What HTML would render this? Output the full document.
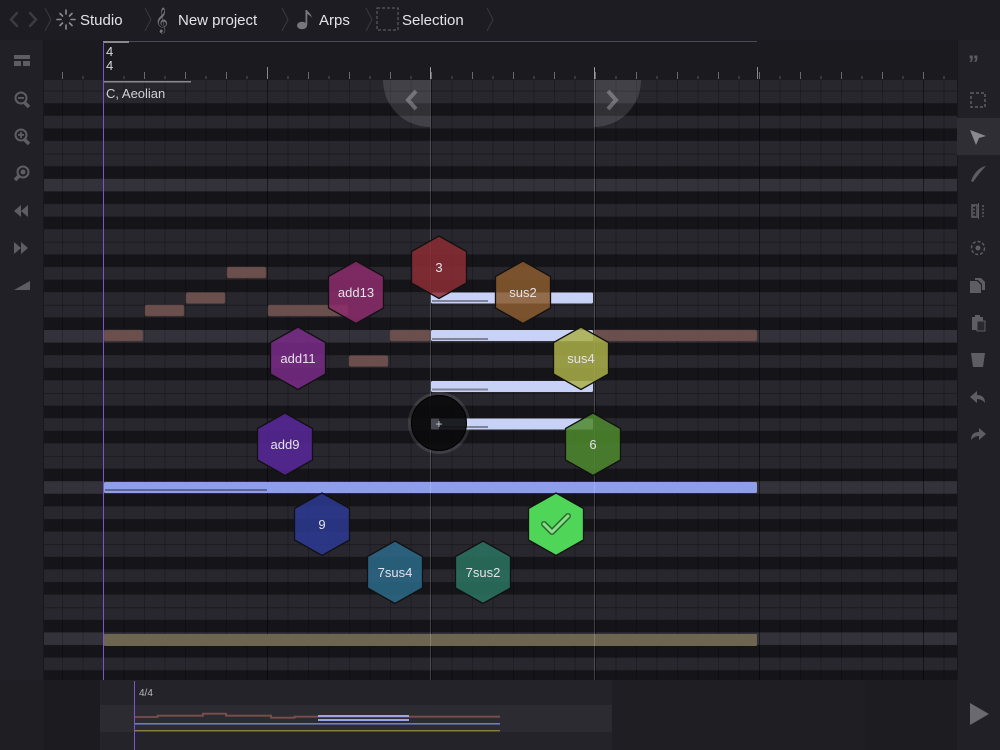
<!DOCTYPE html>
<html><head><meta charset="utf-8"><style>
html,body{margin:0;padding:0;width:1000px;height:750px;overflow:hidden;background:#1c1b21;font-family:"Liberation Sans",sans-serif}
svg{position:absolute;left:0;top:0}
</style></head><body>
<svg width="1000" height="750" viewBox="0 0 1000 750" xmlns="http://www.w3.org/2000/svg" font-family="Liberation Sans, sans-serif">
<defs>
<pattern id="rows" x="0" y="27.6" width="1000" height="151.2" patternUnits="userSpaceOnUse">
<rect x="0" y="0" width="1000" height="151.2" fill="#28272e"/>
<rect x="0" y="0" width="1000" height="12.6" fill="#33323a"/>
<rect x="0" y="12.6" width="1000" height="12.6" fill="#151418"/>
<rect x="0" y="37.8" width="1000" height="12.6" fill="#151418"/>
<rect x="0" y="75.6" width="1000" height="12.6" fill="#151418"/>
<rect x="0" y="100.8" width="1000" height="12.6" fill="#151418"/>
<rect x="0" y="138.6" width="1000" height="12.6" fill="#151418"/>
<rect x="0" y="63" width="1000" height="1" fill="#1c1b20"/>
<rect x="0" y="126" width="1000" height="1" fill="#1c1b20"/>
</pattern>
<pattern id="cols" x="103" y="0" width="20.5" height="10" patternUnits="userSpaceOnUse">
<rect x="0" y="0" width="1" height="10" fill="rgba(0,0,0,0.22)"/>
</pattern>
<pattern id="bars" x="103" y="0" width="164" height="10" patternUnits="userSpaceOnUse">
<rect x="0" y="0" width="1" height="10" fill="rgba(0,0,0,0.35)"/>
</pattern>
<pattern id="tk" x="103" y="0" width="20.5" height="10" patternUnits="userSpaceOnUse">
<rect x="0" y="0" width="1" height="10" fill="#55545c"/>
</pattern>
<pattern id="tb" x="103" y="0" width="41" height="10" patternUnits="userSpaceOnUse">
<rect x="0" y="0" width="1" height="10" fill="#6a6970"/>
</pattern>
</defs>
<rect x="0" y="0" width="1000" height="40" fill="#1d1c22"/>
<g fill="none" stroke="#3c3b42" stroke-width="2.5" stroke-linecap="round">
<path d="M17 13 L11 19.5 L17 26"/><path d="M30 13 L36 19.5 L30 26"/>
</g>
<g fill="none" stroke="#3a3940" stroke-width="1">
<path d="M45 8 L51 19.5 L45 31"/><path d="M145 8 L151 19.5 L145 31"/><path d="M282 8 L288 19.5 L282 31"/><path d="M366 8 L372 19.5 L366 31"/><path d="M487 8 L493 19.5 L487 31"/>
</g>
<g stroke="#8c8b92" stroke-width="1.6" stroke-linecap="round">
<path d="M66 10 L66 14"/><path d="M66 25 L66 29"/><path d="M57 19.5 L61 19.5"/><path d="M71 19.5 L75 19.5"/>
<path d="M60 13.5 L62.5 16"/><path d="M72 13.5 L69.5 16"/><path d="M60 25.5 L62.5 23"/><path d="M72 25.5 L69.5 23"/>
</g>
<text x="80" y="25" font-size="15" fill="#e4e4e8">Studio</text>
<text x="155" y="27" font-size="22" fill="#77767c" font-family="DejaVu Sans, sans-serif">𝄞</text>
<text x="178" y="25" font-size="15" fill="#e4e4e8">New project</text>
<g fill="#77767c"><ellipse cx="302" cy="25.5" rx="5" ry="3.8"/><rect x="305.5" y="10" width="1.8" height="15"/><path d="M306 10 Q311 13 312 18 Q309 14 306 14Z"/></g>
<text x="319" y="25" font-size="15" fill="#e4e4e8">Arps</text>
<rect x="377" y="8" width="21" height="22" fill="none" stroke="#6a6970" stroke-width="1" stroke-dasharray="3 2"/>
<text x="402" y="25" font-size="15" fill="#e4e4e8">Selection</text>
<rect x="0" y="40" width="1000" height="40" fill="#1b1a1f"/>
<rect x="103" y="41" width="654" height="1" fill="#4a4a5a"/>
<rect x="103" y="41" width="26" height="2" fill="#8a8990"/>
<text x="106" y="56" font-size="13" fill="#d8d8dc">4</text>
<text x="106" y="70" font-size="13" fill="#d8d8dc">4</text>
<rect x="44" y="76" width="913" height="3" fill="url(#tk)"/>
<rect x="44" y="72" width="913" height="7" fill="url(#tb)"/>
<g fill="#8a8990"><rect x="267" y="67" width="1" height="12"/><rect x="430" y="67" width="1" height="12"/><rect x="594" y="67" width="1" height="12"/><rect x="757" y="67" width="1" height="12"/></g>
<rect x="44" y="80" width="913" height="600" fill="url(#rows)"/>
<rect x="44" y="80" width="913" height="600" fill="url(#cols)"/>
<rect x="44" y="80" width="913" height="600" fill="url(#bars)"/>
<rect x="103" y="81" width="88" height="1.5" fill="#8a8990"/>
<text x="106" y="98" font-size="13" fill="#d0d0d6">C, Aeolian</text>
<g fill="#6b4f4d" stroke="#57403f" stroke-width="0.5">
<rect x="227" y="267" width="39" height="11" rx="1.5"/>
<rect x="186" y="292.5" width="39" height="11" rx="1.5"/>
<rect x="145" y="305" width="39" height="11" rx="1.5"/>
<rect x="268" y="305" width="80" height="11" rx="1.5"/>
<rect x="104" y="330" width="39" height="11" rx="1.5"/>
<rect x="390" y="330" width="40" height="11" rx="1.5"/>
<rect x="594" y="330" width="163" height="11" rx="1.5"/>
<rect x="349" y="355.5" width="39" height="11" rx="1.5"/>
</g>
<g fill="#c8d2f6">
<rect x="431" y="292.5" width="162" height="11" rx="1.5"/>
<rect x="431" y="330" width="162" height="11" rx="1.5"/>
<rect x="431" y="381" width="162" height="11" rx="1.5"/>
<rect x="431" y="418.5" width="162" height="11" rx="1.5"/>
</g>
<g fill="#7e8398"><rect x="432" y="300" width="56" height="2"/><rect x="432" y="338" width="56" height="2"/><rect x="432" y="388.5" width="56" height="2"/><rect x="432" y="426" width="56" height="2"/></g>
<rect x="104" y="482" width="653" height="11" rx="1.5" fill="#8e9ee8"/>
<rect x="105" y="489" width="162" height="2" fill="#5d6595"/>
<rect x="104" y="634" width="653" height="12" rx="1" fill="#6d6550"/>
<rect x="430" y="68" width="1" height="612" fill="rgba(255,255,255,0.18)"/>
<rect x="594" y="68" width="1" height="612" fill="rgba(255,255,255,0.18)"/>
<rect x="103" y="42" width="1" height="708" fill="#7a55d0"/>
<path d="M430 80 L383 80 A47 47 0 0 0 430 127 Z" fill="rgba(255,255,255,0.12)"/>
<path d="M594 80 L641 80 A47 47 0 0 1 594 127 Z" fill="rgba(255,255,255,0.12)"/>
<path d="M416 91 L408 100 L416 109" fill="none" stroke="rgba(255,255,255,0.28)" stroke-width="4"/>
<path d="M608 91 L616 100 L608 109" fill="none" stroke="rgba(255,255,255,0.28)" stroke-width="4"/>
<g stroke="#111" stroke-width="1.3" fill-opacity="0.85">
<polygon points="439,236 466.5,251.5 466.5,283 439,298.5 411.5,283 411.5,251.5" fill="#8b2d34"/>
<polygon points="356,261 383.5,276.5 383.5,308 356,323.5 328.5,308 328.5,276.5" fill="#8c2c6c"/>
<polygon points="523,261 550.5,276.5 550.5,308 523,323.5 495.5,308 495.5,276.5" fill="#8a5a2e"/>
<polygon points="298,327 325.5,342.5 325.5,374 298,389.5 270.5,374 270.5,342.5" fill="#7a2a88"/>
<polygon points="581,327 608.5,342.5 608.5,374 581,389.5 553.5,374 553.5,342.5" fill="#aab049"/>
<polygon points="285,413 312.5,428.5 312.5,460 285,475.5 257.5,460 257.5,428.5" fill="#58279b"/>
<polygon points="593,413 620.5,428.5 620.5,460 593,475.5 565.5,460 565.5,428.5" fill="#4e8a2d"/>
<polygon points="322,493 349.5,508.5 349.5,540 322,555.5 294.5,540 294.5,508.5" fill="#2c3a93"/>
<polygon points="556,493 583.5,508.5 583.5,540 556,555.5 528.5,540 528.5,508.5" fill="#4fd557" fill-opacity="1"/>
<polygon points="395,541 422.5,556.5 422.5,588 395,603.5 367.5,588 367.5,556.5" fill="#2c6a89"/>
<polygon points="483,541 510.5,556.5 510.5,588 483,603.5 455.5,588 455.5,556.5" fill="#2a7460"/>
</g>
<path d="M544 524 L552 532 L568 516" fill="none" stroke="#2c6b30" stroke-width="6" stroke-linejoin="round" stroke-linecap="round"/>
<path d="M544 524 L552 532 L568 516" fill="none" stroke="#8be08c" stroke-width="3" stroke-linejoin="round" stroke-linecap="round"/>
<g font-size="13" fill="#e4e2e8" text-anchor="middle">
<text x="439" y="272">3</text><text x="356" y="297">add13</text><text x="523" y="297">sus2</text>
<text x="298" y="363">add11</text><text x="581" y="363">sus4</text><text x="285" y="449">add9</text>
<text x="593" y="449">6</text><text x="322" y="529">9</text><text x="395" y="577">7sus4</text><text x="483" y="577">7sus2</text>
</g>
<circle cx="439" cy="423" r="29.5" fill="none" stroke="rgba(255,255,255,0.1)" stroke-width="3"/>
<circle cx="439" cy="423" r="27.5" fill="rgba(10,10,12,0.9)" stroke="#000" stroke-width="1"/>
<rect x="431" y="418.5" width="8" height="11" fill="#5a5d6a" opacity="0.7"/>
<text x="439" y="428" font-size="12" fill="#ccc" text-anchor="middle">+</text>
<rect x="0" y="40" width="44" height="710" fill="#212026"/>
<rect x="43" y="40" width="1" height="640" fill="#18171c"/>
<g fill="#5e5d64">
<rect x="14" y="55" width="16" height="4"/><rect x="14" y="61" width="7" height="5"/><rect x="23" y="61" width="7" height="5"/>
<circle cx="21" cy="98" r="5.5" fill="none" stroke="#5e5d64" stroke-width="2"/><rect x="18" y="97" width="6" height="1.8"/><path d="M24 102 L29 107" stroke="#5e5d64" stroke-width="3.5"/>
<circle cx="21" cy="135" r="5.5" fill="none" stroke="#5e5d64" stroke-width="2"/><rect x="18" y="134" width="6" height="1.8"/><rect x="20.1" y="132" width="1.8" height="6"/><path d="M24 139 L29 144" stroke="#5e5d64" stroke-width="3.5"/>
<circle cx="23" cy="172" r="5.5" fill="none" stroke="#5e5d64" stroke-width="2"/><circle cx="23" cy="172" r="2.5"/><path d="M19 176 L15 180" stroke="#5e5d64" stroke-width="3.5"/>
<path d="M14 211 L21 205 L21 217Z"/><path d="M21 211 L28 205 L28 217Z"/>
<path d="M14 242 L21 248 L14 254Z"/><path d="M21 242 L28 248 L21 254Z"/>
<path d="M14 290 L30 281 L30 290Z"/>
</g>
<rect x="957" y="40" width="43" height="710" fill="#212026"/>
<rect x="957" y="40" width="1" height="640" fill="#18171c"/>
<rect x="957" y="118" width="43" height="37" fill="#2f2e35"/>
<g fill="#5e5d64">
<text x="968" y="71" font-size="22" font-weight="bold" fill="#5e5d64">”</text>
<rect x="971" y="93" width="14" height="14" fill="none" stroke="#5e5d64" stroke-width="1.5" stroke-dasharray="3 2"/>
<path d="M970 130 L986 136 L979 138 L976 145Z" fill="#8a8990"/>
<path d="M971 181 Q976 168 986 166 Q980 172 973 182Z"/>
<path d="M974 205 L974 217 M983 205 L983 217" stroke="#5e5d64" stroke-width="1.5" stroke-dasharray="2 1.5"/><rect x="972" y="205" width="5" height="12" fill="none" stroke="#5e5d64" stroke-width="1.5"/><rect x="978" y="203" width="1" height="16"/>
<circle cx="978" cy="248" r="6.5" fill="none" stroke="#5e5d64" stroke-width="1.5" stroke-dasharray="3 2"/><circle cx="978" cy="248" r="2.5"/>
<path d="M970 281 L977 281 L981 285 L981 293 L970 293Z"/><path d="M975 278 L981 278 L985 282 L985 290 L982 290 L982 284 L978 280 L975 280Z"/>
<rect x="972" y="317" width="11" height="13"/><rect x="975" y="315" width="5" height="3"/><rect x="977" y="321" width="8" height="10" fill="#2a2930" stroke="#5e5d64" stroke-width="1"/>
<path d="M971 353 L985 353 L983 367 L973 367Z"/>
<path d="M970 397 L977 391 L977 395 Q985 395 985 403 Q982 399 977 399 L977 403Z"/>
<path d="M986 434 L979 428 L979 432 Q971 432 971 440 Q974 436 979 436 L979 440Z"/>
</g>
<rect x="0" y="680" width="1000" height="70" fill="#1f1e23"/>
<rect x="44" y="680" width="56" height="70" fill="#1c1b20"/>
<rect x="100" y="680" width="512" height="70" fill="#242329"/>
<rect x="100" y="705" width="512" height="27" fill="#2c2b31"/>
<rect x="865" y="680" width="92" height="70" fill="#1d1c21"/>
<rect x="957" y="680" width="43" height="70" fill="#212026"/>
<rect x="134" y="681" width="1" height="69" fill="#7a55d0"/>
<text x="139" y="696" font-size="10" fill="#b8b8be">4/4</text>
<path d="M135 717 L157.5 717 L157.5 715.7 L203 715.7 L203 713.7 L226 713.7 L226 715.7 L271 715.7 L271 717.7 L294.6 717.7 L294.6 716.7 L500 716.7" fill="none" stroke="#7a4f4b" stroke-width="1.8"/>
<rect x="318" y="715" width="91" height="2" fill="#9aa3e6"/>
<rect x="318" y="719" width="91" height="2" fill="#9aa3e6"/>
<rect x="135" y="723" width="365" height="1.6" fill="#6f7ac0"/>
<rect x="135" y="730" width="365" height="1.4" fill="#8a7d3e"/>
<path d="M970 703 L989 714 L970 725Z" fill="#6a6970"/>
</svg>
</body></html>
